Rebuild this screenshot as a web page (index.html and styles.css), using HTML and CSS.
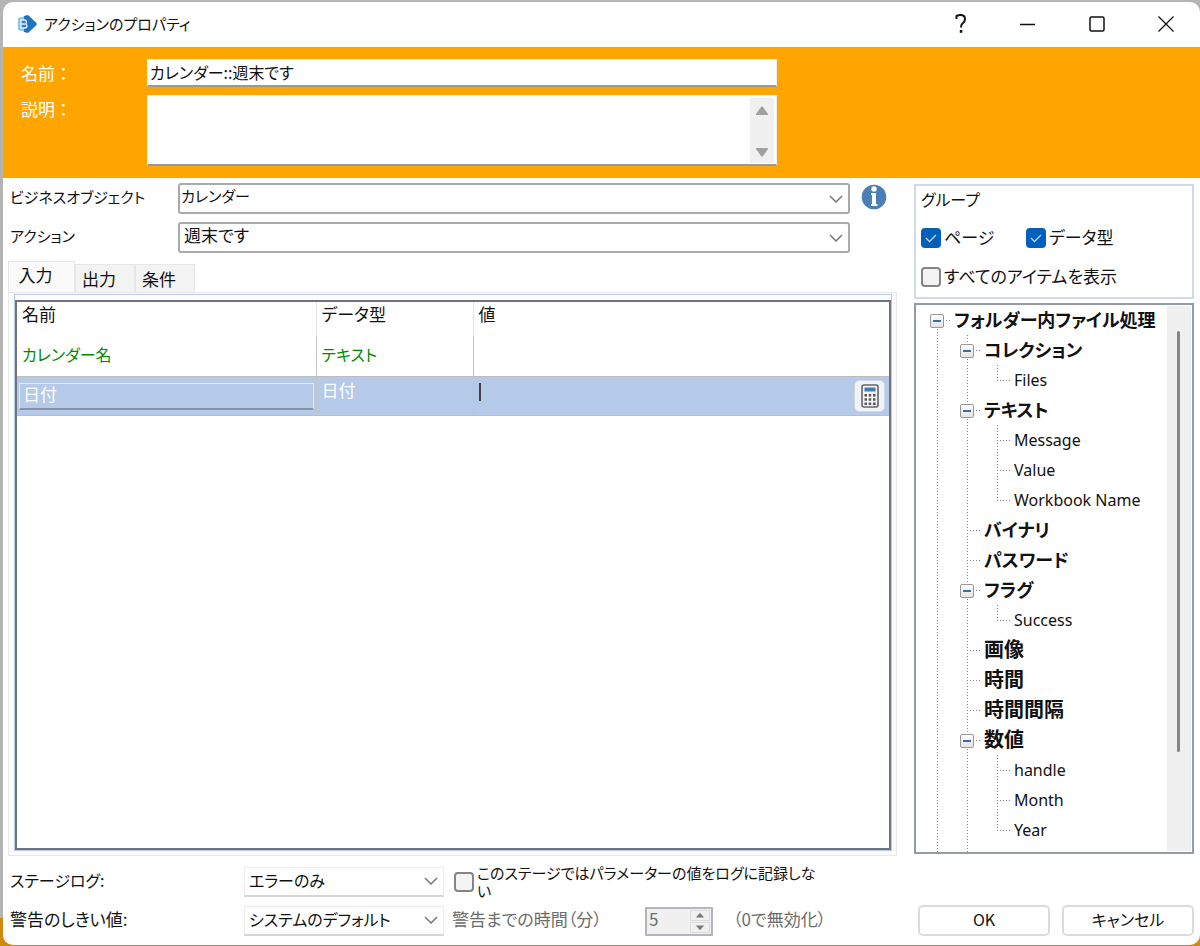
FILE: index.html
```html
<!DOCTYPE html>
<html lang="ja">
<head>
<meta charset="utf-8">
<title>アクションのプロパティ</title>
<link rel="stylesheet" href="styles.css">
</head>
<body>
<div class="window">
  <header class="titlebar">
    <svg class="app-icon" width="20" height="18" viewBox="0 0 20 18" aria-hidden="true">
      <path d="M1 3 L9 1 L9 17 L1 15 Z" fill="#8fc3ea"/>
      <path d="M7 1 L11 0 L19.500 8 Q20 9 19.500 10 L11 18 L7 17 Z" fill="#1b75c4"/>
      <path d="M4 5 H7.500 Q9.500 5 9.500 7 Q9.500 8.500 8.500 9 Q10 9.500 10 11 Q10 13 7.500 13 H4 Z M4 9 H8" fill="#2d83cd" stroke="#e8f3fc" stroke-width="1.300"/>
    </svg>
    <h1 class="title">アクションのプロパティ</h1>
    <button class="caption-button" type="button" aria-label="ヘルプ">
      <svg width="16" height="22" viewBox="0 0 16 22"><path d="M5.500 6 V3 Q7.500 2 9.500 2 Q14 2 14 6 Q14 8.500 11.500 10.500 Q10 11.700 10 14.500" fill="none" stroke="#111" stroke-width="2"/><rect x="8.800" y="17" width="2.500" height="2.800" fill="#111"/></svg>
    </button>
    <button class="caption-button" type="button" aria-label="最小化">
      <svg width="16" height="16" viewBox="0 0 16 16"><path d="M0 8.500 H15" stroke="#111" stroke-width="1.300"/></svg>
    </button>
    <button class="caption-button" type="button" aria-label="最大化">
      <svg width="16" height="16" viewBox="0 0 16 16"><rect x="1" y="1" width="14" height="14" rx="1.500" fill="none" stroke="#111" stroke-width="1.500"/></svg>
    </button>
    <button class="caption-button" type="button" aria-label="閉じる">
      <svg width="16" height="16" viewBox="0 0 16 16"><path d="M.5 .5 L15.500 15.500 M15.500 .5 L.5 15.500" stroke="#111" stroke-width="1.300"/></svg>
    </button>
  </header>

  <section class="banner">
    <label for="name">名前：</label>
    <input class="banner-field" id="name" type="text" value="カレンダー::週末です">
    <label for="desc">説明：</label>
    <div class="banner-field memo">
      <textarea id="desc"></textarea>
      <div class="memo-scroll" aria-hidden="true">
        <svg width="14" height="10" viewBox="0 0 14 10"><path d="M6 1 Q7 0 8 1 L13 8 Q13.500 9 12.500 9 H1.500 Q.5 9 1 8 Z" fill="#a0a0a0"/></svg>
        <svg width="14" height="10" viewBox="0 0 14 10"><path d="M6 9 Q7 10 8 9 L13 2 Q13.500 1 12.500 1 H1.500 Q.5 1 1 2 Z" fill="#a0a0a0"/></svg>
      </div>
    </div>
  </section>

  <main class="content">
    <div class="left">
      <div class="picker">
        <label for="object">ビジネスオブジェクト</label>
        <select class="combo" id="object"><option>カレンダー</option></select>
        <button class="info" type="button" aria-label="情報">
          <svg width="26" height="26" viewBox="0 0 26 26"><circle cx="13" cy="13" r="12.300" fill="#4a7fb5"/><circle cx="13" cy="5" r="2.700" fill="#fff"/><path d="M10 9 H15 V20 H16.500 V22 H10 V20 H11 V11 H10 Z" fill="#fff"/></svg>
        </button>
        <label for="action">アクション</label>
        <select class="combo combo-action" id="action"><option>週末です</option></select>
      </div>

      <div class="tabs" role="tablist">
        <button class="tab tab-active" type="button" role="tab" aria-selected="true">入力</button>
        <button class="tab" type="button" role="tab">出力</button>
        <button class="tab" type="button" role="tab">条件</button>
      </div>
      <div class="tab-panel" role="tabpanel">
        <div class="grid">
          <table class="params">
            <colgroup><col class="col-name"><col class="col-type"><col></colgroup>
            <thead><tr><th>名前</th><th>データ型</th><th>値</th></tr></thead>
            <tbody>
              <tr class="known"><td>カレンダー名</td><td>テキスト</td><td></td></tr>
              <tr class="selected">
                <td><input class="cell-input" type="text" value="日付" aria-label="名前"></td>
                <td class="type">日付</td>
                <td>
                  <div class="value-editor">
                    <span class="caret"></span>
                    <input class="value-input" type="text" aria-label="値">
                    <button class="calc" type="button" aria-label="計算">
                      <svg width="18" height="24" viewBox="0 0 18 24"><rect x="1" y="1" width="16" height="22" rx="2" fill="#f4f4f4" stroke="#666" stroke-width="1.600"/><rect x="3.500" y="3.500" width="11" height="4" fill="#3f7cb8"/><g fill="#555"><path d="M3.500 10h2.500v2.500H3.500zM7.700 10h2.500v2.500H7.700zM12 10h2.500v2.500H12zM3.500 14.300h2.500v2.500H3.500zM7.700 14.300h2.500v2.500H7.700zM12 14.300h2.500v2.500H12zM3.500 18.500h2.500v2.500H3.500zM7.700 18.500h2.500v2.500H7.700zM12 18.500h2.500v2.500H12z"/></g></svg>
                    </button>
                  </div>
                </td>
              </tr>
            </tbody>
          </table>
        </div>
      </div>
    </div>

    <aside class="right">
      <div class="group">
        <div class="group-title">グループ</div>
        <div class="group-row">
          <label class="check page-check"><input type="checkbox" checked><span>ページ</span></label>
          <label class="check"><input type="checkbox" checked><span>データ型</span></label>
        </div>
        <div class="group-row">
          <label class="check"><input type="checkbox"><span>すべてのアイテムを表示</span></label>
        </div>
      </div>

      <div class="tree-box">
        <ul class="tree">
          <li>
            <div class="node"><span class="slot"><button class="toggle" type="button" aria-label="折りたたむ"></button></span><b>フォルダー内ファイル処理</b></div>
            <ul class="types">
              <li>
                <div class="node"><span class="slot"><button class="toggle" type="button" aria-label="折りたたむ"></button></span><b>コレクション</b></div>
                <ul class="items">
                  <li><div class="node"><span class="slot"></span>Files</div></li>
                </ul>
              </li>
              <li>
                <div class="node"><span class="slot"><button class="toggle" type="button" aria-label="折りたたむ"></button></span><b>テキスト</b></div>
                <ul class="items">
                  <li><div class="node"><span class="slot"></span>Message</div></li>
                  <li><div class="node"><span class="slot"></span>Value</div></li>
                  <li><div class="node"><span class="slot"></span>Workbook Name</div></li>
                </ul>
              </li>
              <li><div class="node"><span class="slot"></span><b>バイナリ</b></div></li>
              <li><div class="node"><span class="slot"></span><b>パスワード</b></div></li>
              <li>
                <div class="node"><span class="slot"><button class="toggle" type="button" aria-label="折りたたむ"></button></span><b>フラグ</b></div>
                <ul class="items">
                  <li><div class="node"><span class="slot"></span>Success</div></li>
                </ul>
              </li>
              <li><div class="node"><span class="slot"></span><b class="kanji">画像</b></div></li>
              <li><div class="node"><span class="slot"></span><b class="kanji">時間</b></div></li>
              <li><div class="node"><span class="slot"></span><b class="kanji">時間間隔</b></div></li>
              <li>
                <div class="node"><span class="slot"><button class="toggle" type="button" aria-label="折りたたむ"></button></span><b class="kanji">数値</b></div>
                <ul class="items">
                  <li><div class="node"><span class="slot"></span>handle</div></li>
                  <li><div class="node"><span class="slot"></span>Month</div></li>
                  <li><div class="node"><span class="slot"></span>Year</div></li>
                </ul>
              </li>
            </ul>
          </li>
        </ul>
        <div class="tree-scroll" aria-hidden="true"><div class="tree-thumb"></div></div>
      </div>
    </aside>
  </main>

  <footer class="footer">
    <div class="footer-row">
      <label class="footer-label kana" for="log">ステージログ:</label>
      <select class="flat-combo" id="log"><option>エラーのみ</option></select>
      <label class="check log-check"><input type="checkbox"><span class="log-text">このステージではパラメーターの値をログに記録しない</span></label>
    </div>
    <div class="footer-row">
      <label class="footer-label" for="limit">警告のしきい値:</label>
      <select class="flat-combo" id="limit"><option>システムのデフォルト</option></select>
      <label class="muted minutes-label" for="minutes">警告までの時間（分）</label>
      <div class="spin">
        <input id="minutes" type="text" value="5" disabled>
        <div class="spin-arrows" aria-hidden="true">
          <svg width="20" height="11" viewBox="0 0 20 11"><path d="M10 2 L15 8 H5 Z" fill="#777"/></svg>
          <svg width="20" height="11" viewBox="0 0 20 11"><path d="M10 9 L15 3 H5 Z" fill="#777"/></svg>
        </div>
      </div>
      <span class="muted">（0で無効化）</span>
      <div class="actions">
        <button class="push" type="button">OK</button>
        <button class="push" type="button">キャンセル</button>
      </div>
    </div>
  </footer>
</div>
</body>
</html>
```

FILE: styles.css
```css
* {
  box-sizing: border-box;
}

body {
  margin: 0;
  min-height: 100vh;
  display: flex;
  padding: 2px 0 1px 3px;
  background: linear-gradient(#b4b4b4 0 97%, #d08a10 97%);
  color: #111;
  font-family: "Noto Sans CJK JP", sans-serif;
  font-size: 17px;
  line-height: 20px;
  font-feature-settings: "palt";
}

input,
select,
textarea,
button {
  margin: 0;
  padding: 0;
  border: 0;
  border-radius: 0;
  background: none;
  color: inherit;
  font: inherit;
  font-feature-settings: inherit;
  appearance: none;
}

.window {
  flex: 1;
  min-width: 0;
  display: flex;
  flex-direction: column;
  background: #fff;
  border-radius: 10px;
  overflow: hidden;
}

/* Title bar */
.titlebar {
  display: flex;
  align-items: center;
  height: 45px;
  padding: 0 0 2px 14px;
}

.title {
  flex: 1;
  margin: 0 0 0 7px;
  font-size: 15px;
  font-weight: 400;
}

.caption-button {
  display: grid;
  place-items: center;
  width: 69px;
  height: 43px;
}

/* Name and description */
.banner {
  display: grid;
  grid-template-columns: 126px minmax(0, 630px);
  row-gap: 8px;
  padding: 12px 17px 12px 18px;
  background: #ffa500;
  color: #fff;
}

.banner label {
  padding-top: 4px;
  font-feature-settings: normal;
}

.banner-field {
  background: #fff;
  color: #111;
  border: 1px solid #f0f0f0;
  border-bottom: 2px solid #999;
}

input.banner-field {
  height: 28px;
  padding: 0 2px 2px;
  font-size: 16px;
}

.memo {
  display: flex;
  height: 71px;
}

.memo textarea {
  flex: 1;
  resize: none;
}

.memo-scroll {
  display: flex;
  flex-direction: column;
  justify-content: space-between;
  align-items: center;
  width: 24px;
  margin: 2px 2px 1px 0;
  padding: 8px 0 6px;
  background: #f0f0f0;
}

/* Main area */
.content {
  flex: 1;
  min-height: 0;
  display: grid;
  grid-template-columns: minmax(0, 1fr) 280px;
  column-gap: 17px;
  padding: 5px 6px 0 5px;
}

.left,
.right {
  display: flex;
  flex-direction: column;
  min-height: 0;
}

.picker {
  display: grid;
  grid-template-columns: 170px minmax(0, 1fr) 26px;
  row-gap: 8px;
  align-items: center;
  padding-right: 10px;
  font-size: 15px;
}

.picker label {
  padding: 0 0 4px 2px;
}

.combo,
.flat-combo {
  background: #fff url("data:image/svg+xml,%3Csvg xmlns='http://www.w3.org/2000/svg' width='14' height='8'%3E%3Cpath d='M1 1 L7 7 L13 1' fill='none' stroke='%23777' stroke-width='1.500'/%3E%3C/svg%3E") no-repeat right 5px center;
}

.combo {
  height: 31px;
  margin-right: 11px;
  padding: 0 24px 6px 1px;
  border: 2px solid #aaa;
  border-radius: 3px;
}

.combo-action {
  padding-left: 4px;
  font-size: 17px;
}

.info {
  display: grid;
  padding-bottom: 4px;
}

/* Tabs */
.tabs {
  display: flex;
  align-items: flex-end;
  height: 31px;
  margin-top: 8px;
}

.tab {
  width: 60px;
  height: 28px;
  padding-right: 12px;
  background: #f3f3f3;
  border: 1px solid #e6e6e6;
  border-bottom: 0;
}

.tab-active {
  width: 67px;
  height: 31px;
  padding-bottom: 4px;
  background: #fafafa;
}

.tab-panel {
  flex: 1;
  display: flex;
  padding: 1px 4px 4px 5px;
  background: #fbfbfb;
  border: 1px solid #e8e8e8;
}

.grid {
  flex: 1;
  min-width: 0;
  display: flex;
  flex-direction: column;
  padding-top: 5px;
  border: 1px solid #b9cbe6;
  background: #fff;
}

.grid::after {
  content: "";
  flex: 1;
  border: solid #6f757c;
  border-width: 0 2px 2px;
}

.params {
  width: 100%;
  table-layout: fixed;
  border-collapse: collapse;
  border: 2px solid #6f757c;
  border-bottom: 0;
}

.col-name {
  width: 300px;
}

.col-type {
  width: 157px;
}

.params th,
.params td {
  padding: 0 5px;
  text-align: left;
  font-weight: 400;
  vertical-align: top;
  border-right: 1px solid #c4c4c4;
}

.params th {
  height: 35px;
  padding-top: 2px;
  border-right-color: #e4e4e4;
}

.params td {
  height: 40px;
  border-bottom: 1px solid #bdbdbd;
}

.params .known td {
  padding-top: 8px;
  color: #008a00;
  font-size: 16px;
}

.params .selected td {
  height: 39px;
  padding: 0 2px;
  background: #b5c9e8;
}

.params .selected .type {
  padding: 3px 5px;
  color: #fff;
}

.cell-input {
  display: block;
  width: 100%;
  height: 27px;
  margin-top: 6px;
  padding: 0 3px 4px;
  color: #fff;
  border: 1px solid #e3ebf7;
  border-bottom: 2px solid #8794a8;
}

.value-editor {
  display: flex;
  align-items: center;
  height: 38px;
  padding: 0 2px 0 3px;
}

.caret {
  width: 2px;
  height: 18px;
  margin-bottom: 8px;
  background: #4c4038;
}

.value-input {
  flex: 1;
  min-width: 0;
}

.calc {
  display: grid;
  place-items: center;
  width: 31px;
  height: 32px;
  background: #f0f3f8;
  border: 1px solid #cfd6e0;
  border-radius: 5px;
}

/* Grouping */
.group {
  margin-top: 1px;
  padding: 3px 5px 0;
  height: 115px;
  border: 2px solid #cfdae8;
}

.group-title {
  height: 29px;
  font-size: 16px;
}

.group-row {
  display: flex;
  height: 39px;
}

.check {
  display: flex;
  align-items: center;
  gap: 3px;
}

.group .check span {
  padding-bottom: 2px;
}

.page-check {
  width: 105px;
}

.check input {
  flex: none;
  width: 20px;
  height: 20px;
  background: #f3f3f3;
  border: 2px solid #858585;
  border-radius: 4px;
}

.check input:checked {
  border-color: #0060bc;
  background: #0060bc url("data:image/svg+xml,%3Csvg xmlns='http://www.w3.org/2000/svg' width='12' height='10'%3E%3Cpath d='M1 5 L4.500 8.500 L11 2' fill='none' stroke='%23bcd9f5' stroke-width='1.300'/%3E%3C/svg%3E") no-repeat center;
}

/* Tree */
.tree-box {
  flex: 1;
  min-height: 0;
  display: flex;
  margin-top: 4px;
  margin-bottom: 2px;
  border: 2px solid #969ca4;
  overflow: hidden;
}

.tree-box ul {
  margin: 0;
  padding: 0;
  list-style: none;
}

.tree-box .tree {
  flex: 1;
  display: flex;
  min-width: 0;
  padding-left: 14px;
}

.tree li {
  background: repeating-linear-gradient(#888 0 1px, transparent 1px 3px) no-repeat 7px 0 / 1px 100%;
}

.tree > li {
  flex: 1;
  display: flex;
  flex-direction: column;
  background-position-y: 15px;
}

.tree .types {
  flex: 1;
  display: flex;
  flex-direction: column;
  padding-left: 30px;
}

.types > li:last-child {
  flex: 1;
}

.tree .items {
  padding-left: 30px;
}

.items > li:last-child {
  background-size: 1px 16px;
}

.node {
  display: flex;
  align-items: center;
  height: 30px;
  white-space: nowrap;
  font-family: "Noto Sans", "Noto Sans CJK JP", sans-serif;
  font-size: 16px;
}

.node b {
  padding-bottom: 2px;
  font-family: "Noto Sans CJK JP", sans-serif;
  font-size: 18px;
  line-height: 28px;
}

.node .kanji {
  font-size: 20px;
}

.slot {
  width: 24px;
  height: 30px;
  padding-top: 9px;
  background: repeating-linear-gradient(90deg, #888 0 1px, transparent 1px 3px) no-repeat 7px 15px / 13px 1px;
}

.toggle {
  display: block;
  width: 14px;
  height: 14px;
  border: 1px solid #989898;
  border-radius: 2px;
  background: linear-gradient(#4569a5, #4569a5) no-repeat center / 8px 2px, linear-gradient(#fff, #e4e4e4);
}

.tree-scroll {
  width: 24px;
  margin: 1px;
  padding: 25px 10px;
  background: #f0f0f0;
}

.tree-thumb {
  width: 3px;
  height: 85%;
  border-radius: 2px;
  background: #868686;
}

/* Footer */
.footer {
  display: flex;
  flex-direction: column;
  gap: 8px;
  padding: 10px 6px 9px 7px;
}

.footer-row {
  display: flex;
  align-items: center;
  height: 31px;
}

.footer-label {
  width: 234px;
  padding-bottom: 4px;
}

.kana {
  font-size: 16px;
}

.flat-combo {
  width: 200px;
  height: 30px;
  padding: 0 24px 2px 4px;
  border: 1px solid #ececec;
  border-bottom: 2px solid #d6d6d6;
  font-size: 16px;
}

.log-check {
  margin-left: 10px;
}

.log-text {
  width: 350px;
  font-size: 15px;
  line-height: 18px;
}

.muted {
  padding-bottom: 4px;
  color: #6c6c6c;
}

.minutes-label {
  width: 193px;
  margin-left: 8px;
}

.spin {
  display: flex;
  width: 68px;
  height: 29px;
  margin: 2px 20px 0 0;
  border: 2px solid #b2b5bb;
  background: #f0f0f0;
}

.spin input {
  flex: 1;
  min-width: 0;
  padding: 0 0 5px 2px;
  color: #6c6c6c;
}

.spin-arrows {
  display: grid;
  gap: 1px;
  margin: 1px;
}

.spin-arrows svg {
  border: 1px solid #dcdcdc;
}

.actions {
  display: flex;
  gap: 12px;
  margin-left: auto;
}

.push {
  width: 132px;
  height: 31px;
  padding-bottom: 4px;
  border: 2px solid #dcdcdc;
  border-radius: 5px;
  font-size: 16px;
}
```
